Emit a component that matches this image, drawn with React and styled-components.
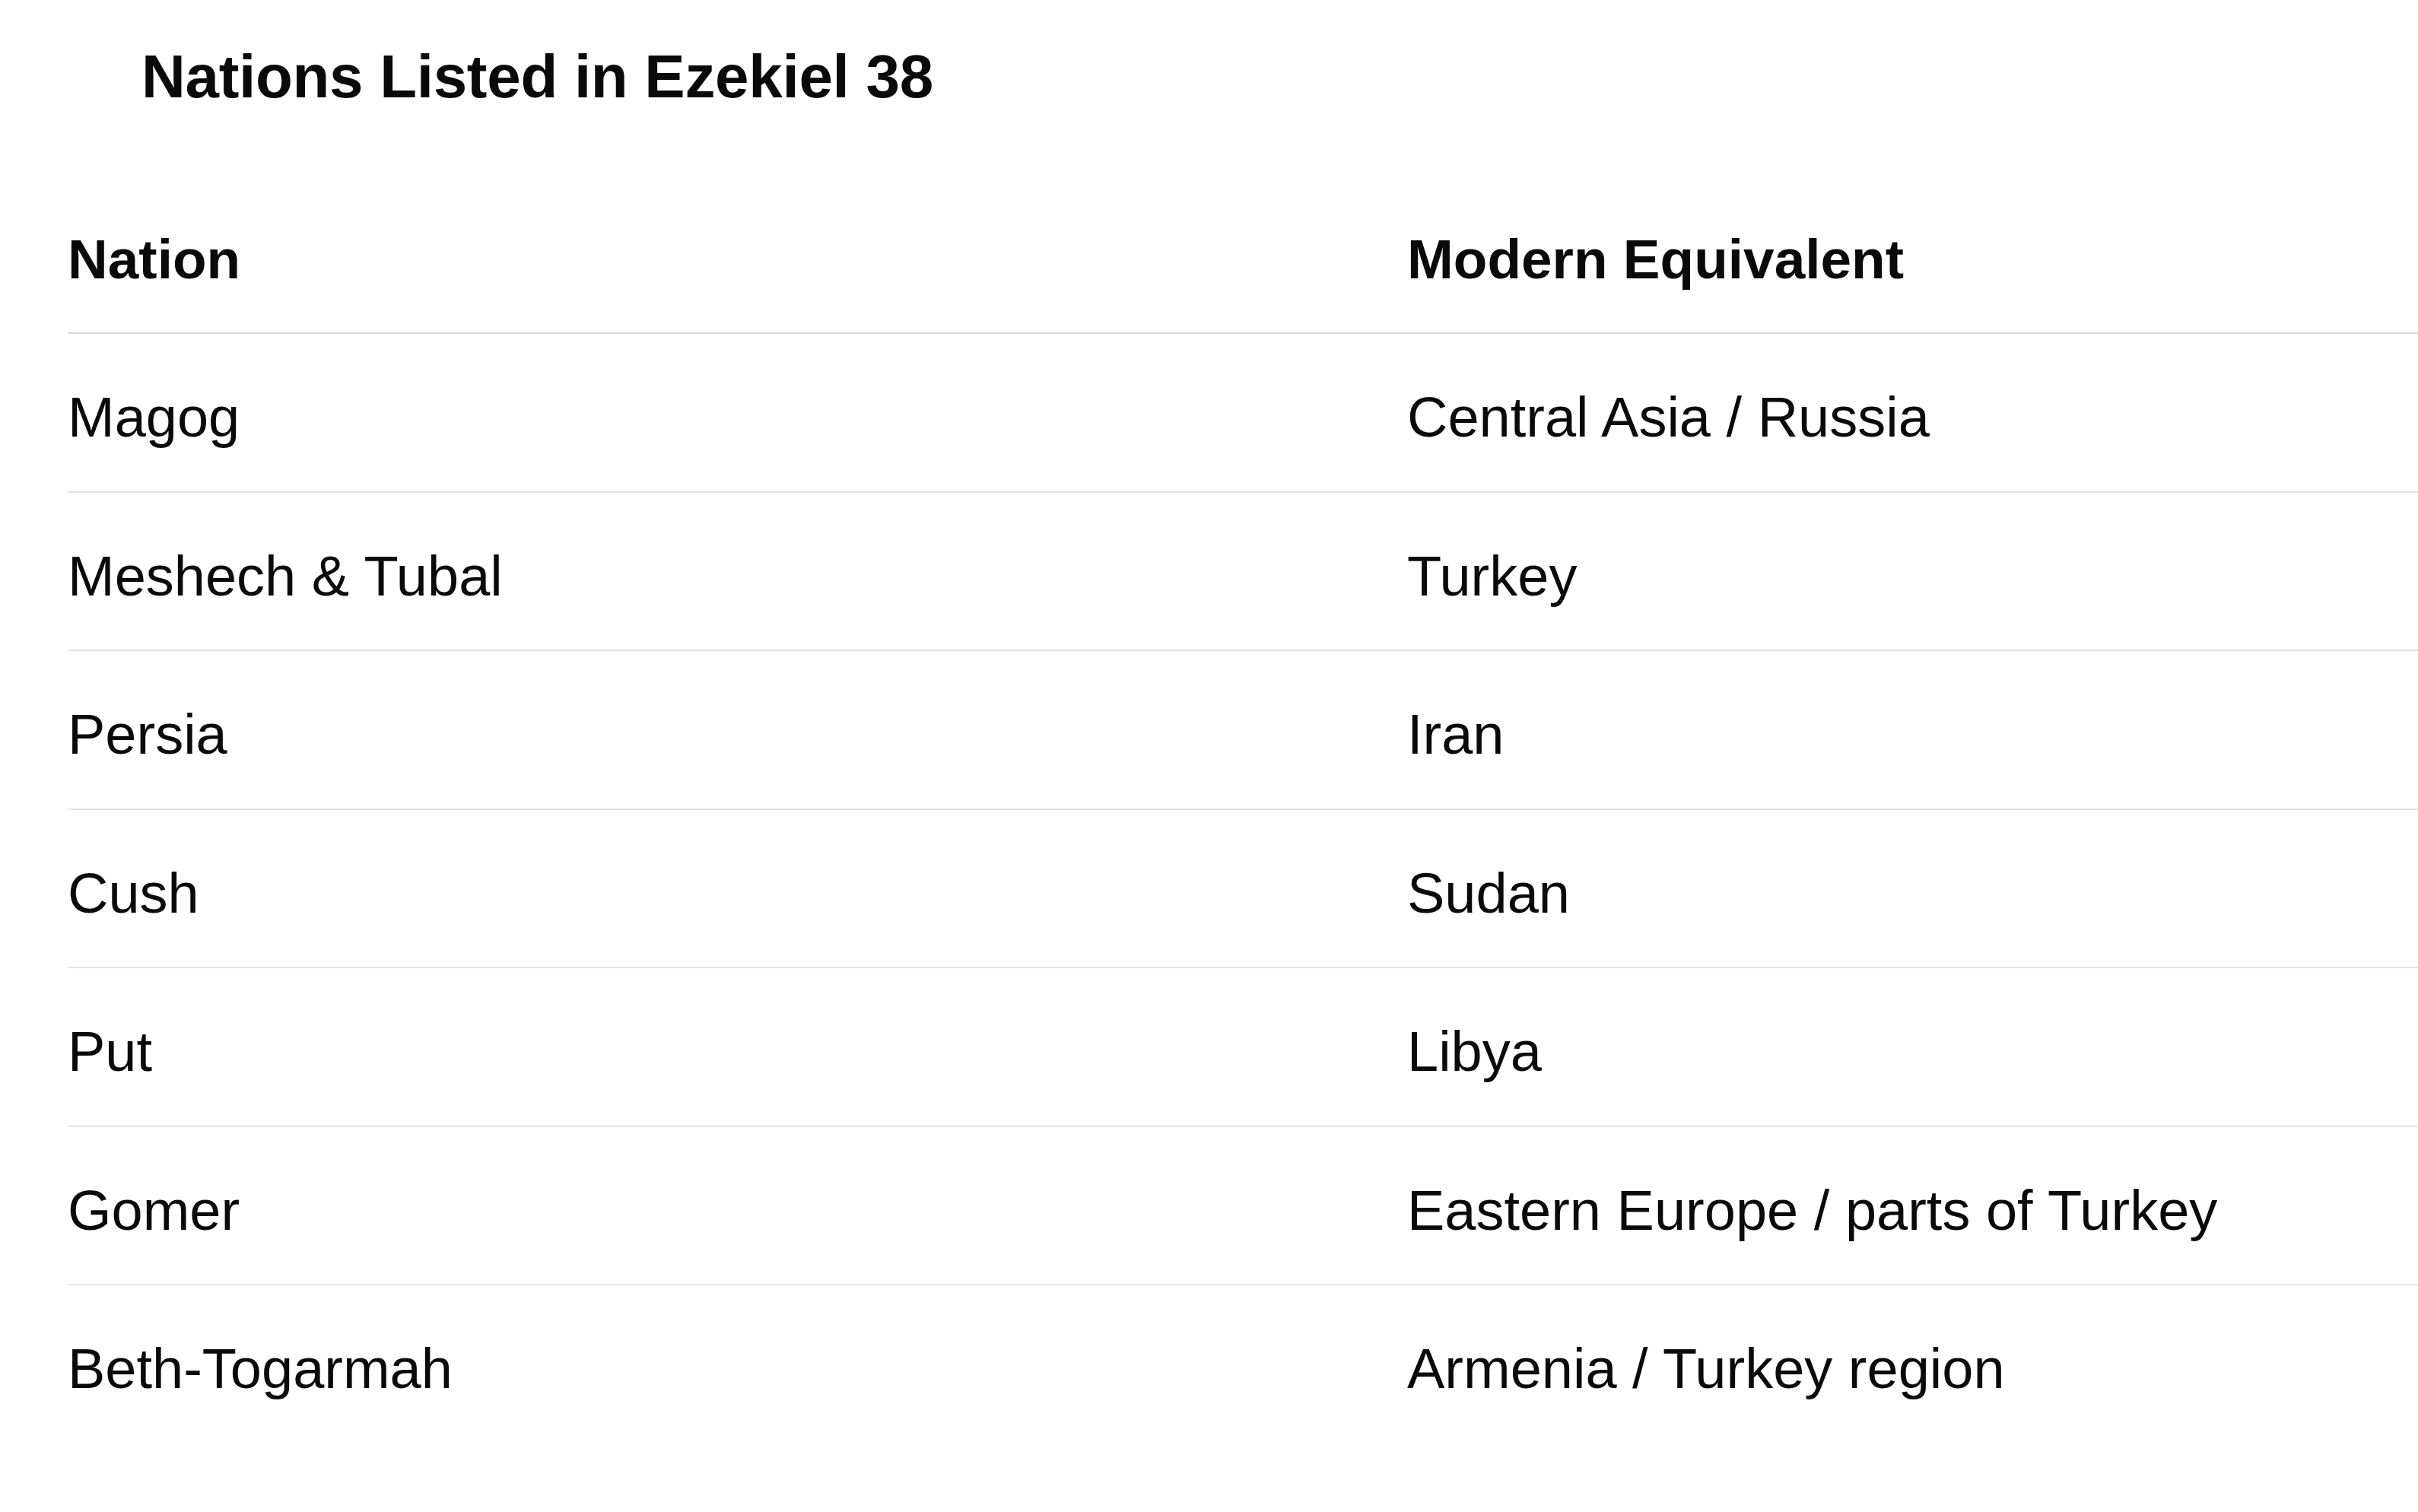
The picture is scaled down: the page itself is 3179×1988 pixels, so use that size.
import React from 'react';
import styled, { createGlobalStyle } from 'styled-components';

const nations = [
  { nation: 'Magog', modern: 'Central Asia / Russia' },
  { nation: 'Meshech & Tubal', modern: 'Turkey' },
  { nation: 'Persia', modern: 'Iran' },
  { nation: 'Cush', modern: 'Sudan' },
  { nation: 'Put', modern: 'Libya' },
  { nation: 'Gomer', modern: 'Eastern Europe / parts of Turkey' },
  { nation: 'Beth-Togarmah', modern: 'Armenia / Turkey region' },
];

const GlobalStyle = createGlobalStyle`
  html, body {
    margin: 0;
    padding: 0;
    background: #ffffff;
  }
  body {
    font-family: "Liberation Sans", Arial, sans-serif;
    color: #0a0a0a;
    overflow: hidden;
  }
`;

const Page = styled.div`
  width: 100%;
  min-height: 1988px;
  padding-top: 51px;
  box-sizing: border-box;
  overflow: hidden;
`;

const Title = styled.h2`
  margin: 0 0 0 186px;
  font-size: 80px;
  line-height: 100px;
  font-weight: 700;
  letter-spacing: -0.3px;
`;

const Table = styled.div`
  margin: 80px 0 0 89px;
  display: flex;
  flex-direction: column;
`;

const Row = styled.div`
  display: grid;
  grid-template-columns: 1761px 1fr;
  padding: ${p => (p.$head ? '66px 0 52.3px' : '66px 0 52.5px')};
  border-bottom: ${p =>
    p.$last ? 'none' : p.$head ? '2px solid #d6d6d6' : '2px solid #e4e4e4'};
`;

const Cell = styled.div`
  font-size: ${p => (p.$head ? '73px' : '74px')};
  line-height: 88px;
  font-weight: ${p => (p.$head ? 700 : 400)};
  white-space: nowrap;
`;

export default function App() {
  return (
    <>
      <GlobalStyle />
      <Page>
        <Title>Nations Listed in Ezekiel 38</Title>
        <Table>
          <Row $head>
            <Cell $head>Nation</Cell>
            <Cell $head>Modern Equivalent</Cell>
          </Row>
          {nations.map((n, i) => (
            <Row key={n.nation} $last={i === nations.length - 1}>
              <Cell>{n.nation}</Cell>
              <Cell>{n.modern}</Cell>
            </Row>
          ))}
        </Table>
      </Page>
    </>
  );
}
